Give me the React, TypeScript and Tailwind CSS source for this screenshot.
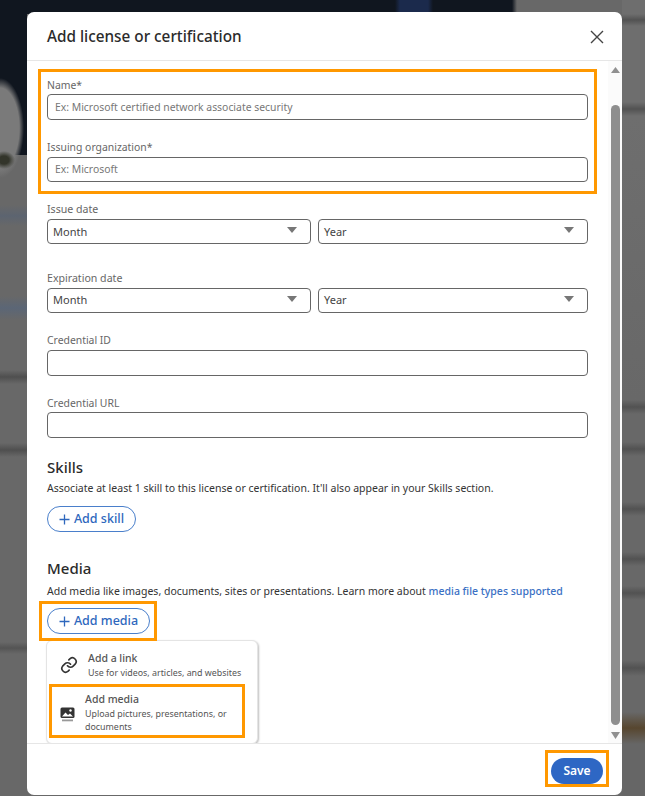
const font = "font-['Noto_Sans','Open_Sans',sans-serif]";

const backdrop =
  "[background:radial-gradient(11px_9px_at_4px_160px,#33352b_45%,transparent),radial-gradient(24px_50px_at_0_128px,#7a7a7a_80%,transparent),linear-gradient(to_right,#10161f_395px,#1b2a4c_400px,#1b2a4c_428px,#10161f_433px,#10161f_512px,transparent_517px)_0_0/100%_14px_no-repeat,linear-gradient(#10161f,#10161f)_0_0/27px_155px_no-repeat,linear-gradient(to_bottom,#686868_205px,#5c6470_216px,#686868_226px,#686868_296px,#5b6676_308px,#686868_320px,#686868_370px,#4f4f4f_377px,#686868_384px,#686868_443px,#4f4f4f_450px,#686868_457px,#686868_642px,#545454_648px,#686868_654px)_0_0/27px_100%_no-repeat,linear-gradient(to_bottom,#6e6e6e_14px,#525252_20px,#6e6e6e_26px,#6e6e6e_102px,#525252_109px,#6e6e6e_116px,#686868_400px,#525252_407px,#686868_414px,#686868_442px,#525252_449px,#686868_456px,#686868_502px,#525252_509px,#686868_516px,#686868_552px,#525252_559px,#686868_566px,#686868_586px,#525252_593px,#686868_600px,#686868_660px,#525252_668px,#686868_676px,#686868_712px,#57462f_728px,#666666_744px)_100%_0/23px_100%_no-repeat,#686868]";

function Field({ label, placeholder, className, control }: { label: string; placeholder?: string; className: string; control: string }) {
  return (
    <div className={className}>
      <div className="text-[10.4px] leading-[16px] text-[#666]">{label}</div>
      <div className={`${control} flex items-center rounded-[4px] border border-[#666] bg-white px-[7px] pt-[1px] text-[10.4px] text-[#777]`}>{placeholder}</div>
    </div>
  );
}

function Select({ value, className, text = "" }: { value: string; className: string; text?: string }) {
  return (
    <div className={`flex h-[25px] items-center justify-between rounded-[4px] border border-[#666] bg-white pl-[5px] pr-[13px] text-[11px] text-[#444] ${className}`}>
      <span className={text}>{value}</span>
      <svg width="10" height="6" viewBox="0 0 10 6" className="mb-[3px]"><path d="M0 0h10L5 6z" fill="#777" /></svg>
    </div>
  );
}

function DateRow({ label, className, text }: { label: string; className: string; text?: string }) {
  return (
    <div className={className}>
      <div className="text-[10.6px] leading-[16px] text-[#666]">{label}</div>
      <div className="mt-[2px] flex gap-[7px]">
        <Select value="Month" className="w-[264px]" text={text} />
        <Select value="Year" className="w-[270px]" text={text} />
      </div>
    </div>
  );
}

function Pill({ label, className }: { label: string; className: string }) {
  return (
    <button className={`flex h-[26px] items-center justify-center gap-[4px] rounded-full border border-[#4a7fcb] bg-white text-[12.5px] font-medium text-[#2e67bd] ${className}`}>
      <svg width="11" height="11" viewBox="0 0 11 11"><path d="M5.5 0.5v10M0.5 5.5h10" stroke="#2e67bd" strokeWidth="1.3" /></svg>
      {label}
    </button>
  );
}

export default function App() {
  return (
    <div className={`relative h-[796px] w-[645px] overflow-hidden pl-[27px] pt-[12px] ${backdrop} ${font}`}>
      <div className="flex h-[783px] w-[595px] flex-col overflow-hidden rounded-[7px] bg-white">
        <div className="flex h-[49px] shrink-0 items-center justify-between border-b border-[#e6e6e6] pl-[20px] pr-[18px]">
          <h2 className="text-[15.3px] font-medium text-[#2b2b2b]">Add license or certification</h2>
          <svg width="14" height="14" viewBox="0 0 14 14" className="mt-[2px]"><path d="M1 1l12 12M13 1L1 13" stroke="#444" strokeWidth="1.4" /></svg>
        </div>

        <div className="flex min-h-0 flex-1 overflow-hidden">
          <div className="min-w-0 flex-1 pl-[20px]">
            <Field label="Name*" placeholder="Ex: Microsoft certified network associate security" className="w-[541px] pt-[16px]" control="mt-[1px] h-[26px]" />
            <Field label="Issuing organization*" placeholder="Ex: Microsoft" className="mt-[19px] w-[541px]" control="mt-[2px] h-[25px]" />
            <DateRow label="Issue date" className="mt-[19px] w-[541px]" text="pt-[1px]" />
            <DateRow label="Expiration date" className="mt-[26px] w-[541px]" />
            <Field label="Credential ID" className="mt-[19px] w-[541px]" control="mt-[2px] h-[26px]" />
            <Field label="Credential URL" className="mt-[19px] w-[541px]" control="mt-[1px] h-[26px]" />

            <h3 className="mt-[19px] text-[15px] font-medium leading-[20px] text-[#2b2b2b]">Skills</h3>
            <p className="mt-[3px] text-[10.5px] leading-[16px] text-[#333]">Associate at least 1 skill to this license or certification. It'll also appear in your Skills section.</p>
            <Pill label="Add skill" className="mt-[10px] w-[89px]" />

            <h3 className="mt-[26px] text-[15px] font-medium leading-[20px] text-[#2b2b2b]">Media</h3>
            <p className="mt-[5px] text-[10.5px] leading-[16px] text-[#333]">
              Add media like images, documents, sites or presentations. Learn more about <span className="font-medium text-[#3a70c4]">media file types supported</span>
            </p>
            <Pill label="Add media" className="mt-[9px] w-[103px]" />

            <div className="ml-[-1px] mt-[6px] h-[104px] w-[212px] rounded-[6px] border border-[#e4e4e4] bg-white shadow-[1px_1px_2px_rgba(0,0,0,0.25)]">
              <div className="flex items-center gap-[10px] pl-[13px] pt-[10px]">
                <svg width="18" height="18" viewBox="0 0 24 24" fill="none" stroke="#333" strokeWidth="2.2" strokeLinecap="round" strokeLinejoin="round"><path d="M10 13a5 5 0 0 0 7.5.5l3-3a5 5 0 0 0-7-7l-1.7 1.7" /><path d="M14 11a5 5 0 0 0-7.5-.5l-3 3a5 5 0 0 0 7 7l1.7-1.7" /></svg>
                <div>
                  <div className="text-[10.5px] font-medium leading-[14px] text-[#555]">Add a link</div>
                  <div className="mt-[1px] whitespace-nowrap text-[8.9px] leading-[13px] text-[#555]">Use for videos, articles, and websites</div>
                </div>
              </div>
              <div className="mt-[13px] flex items-center gap-[10px] pl-[13px]">
                <svg width="15" height="15" viewBox="0 0 15 15" className="mt-[4px] shrink-0"><rect x="0.5" y="0.5" width="14" height="10.5" rx="1.5" fill="#333" /><circle cx="10.5" cy="3.5" r="1.2" fill="#fff" /><path d="M2 9.5l3.5-4 2.5 2.5 2-1.5 3 3z" fill="#fff" /><rect x="2" y="12.5" width="11" height="1.8" fill="#999" /></svg>
                <div className="w-[160px]">
                  <div className="text-[10.5px] font-medium leading-[14px] text-[#555]">Add media</div>
                  <div className="mt-[1px] text-[8.9px] leading-[13px] text-[#555]">Upload pictures, presentations, or documents</div>
                </div>
              </div>
            </div>
          </div>

          <div className="flex w-[14px] shrink-0 flex-col items-center bg-[#fbfbfb]">
            <svg width="9" height="6" viewBox="0 0 9 6" className="mt-[6px]"><path d="M4.5 0L9 6H0z" fill="#909090" /></svg>
            <div className="mt-[32px] w-[9px] flex-1 rounded-full bg-[#8e8e8e]" />
            <svg width="9" height="7" viewBox="0 0 9 7" className="mb-[4px] mt-[7px]"><path d="M0 0h9L4.5 7z" fill="#909090" /></svg>
          </div>
        </div>

        <div className="flex h-[52px] shrink-0 items-center justify-end border-t border-[#e6e6e6] pr-[19px]">
          <button className="mt-[2px] flex h-[26px] w-[52px] items-center justify-center rounded-full bg-[#2e67c4] text-[12px] font-semibold text-white">Save</button>
        </div>
      </div>

      <div className="absolute left-[38px] top-[69px] h-[125px] w-[559px] border-[3px] border-[#ff9800]" />
      <div className="absolute left-[39px] top-[601px] h-[40px] w-[118px] border-[3px] border-[#ff9800]" />
      <div className="absolute left-[49px] top-[684px] h-[54px] w-[196px] border-[3px] border-[#ff9800]" />
      <div className="absolute left-[545px] top-[750px] h-[37px] w-[64px] border-[3px] border-[#ff9800]" />
    </div>
  );
}
